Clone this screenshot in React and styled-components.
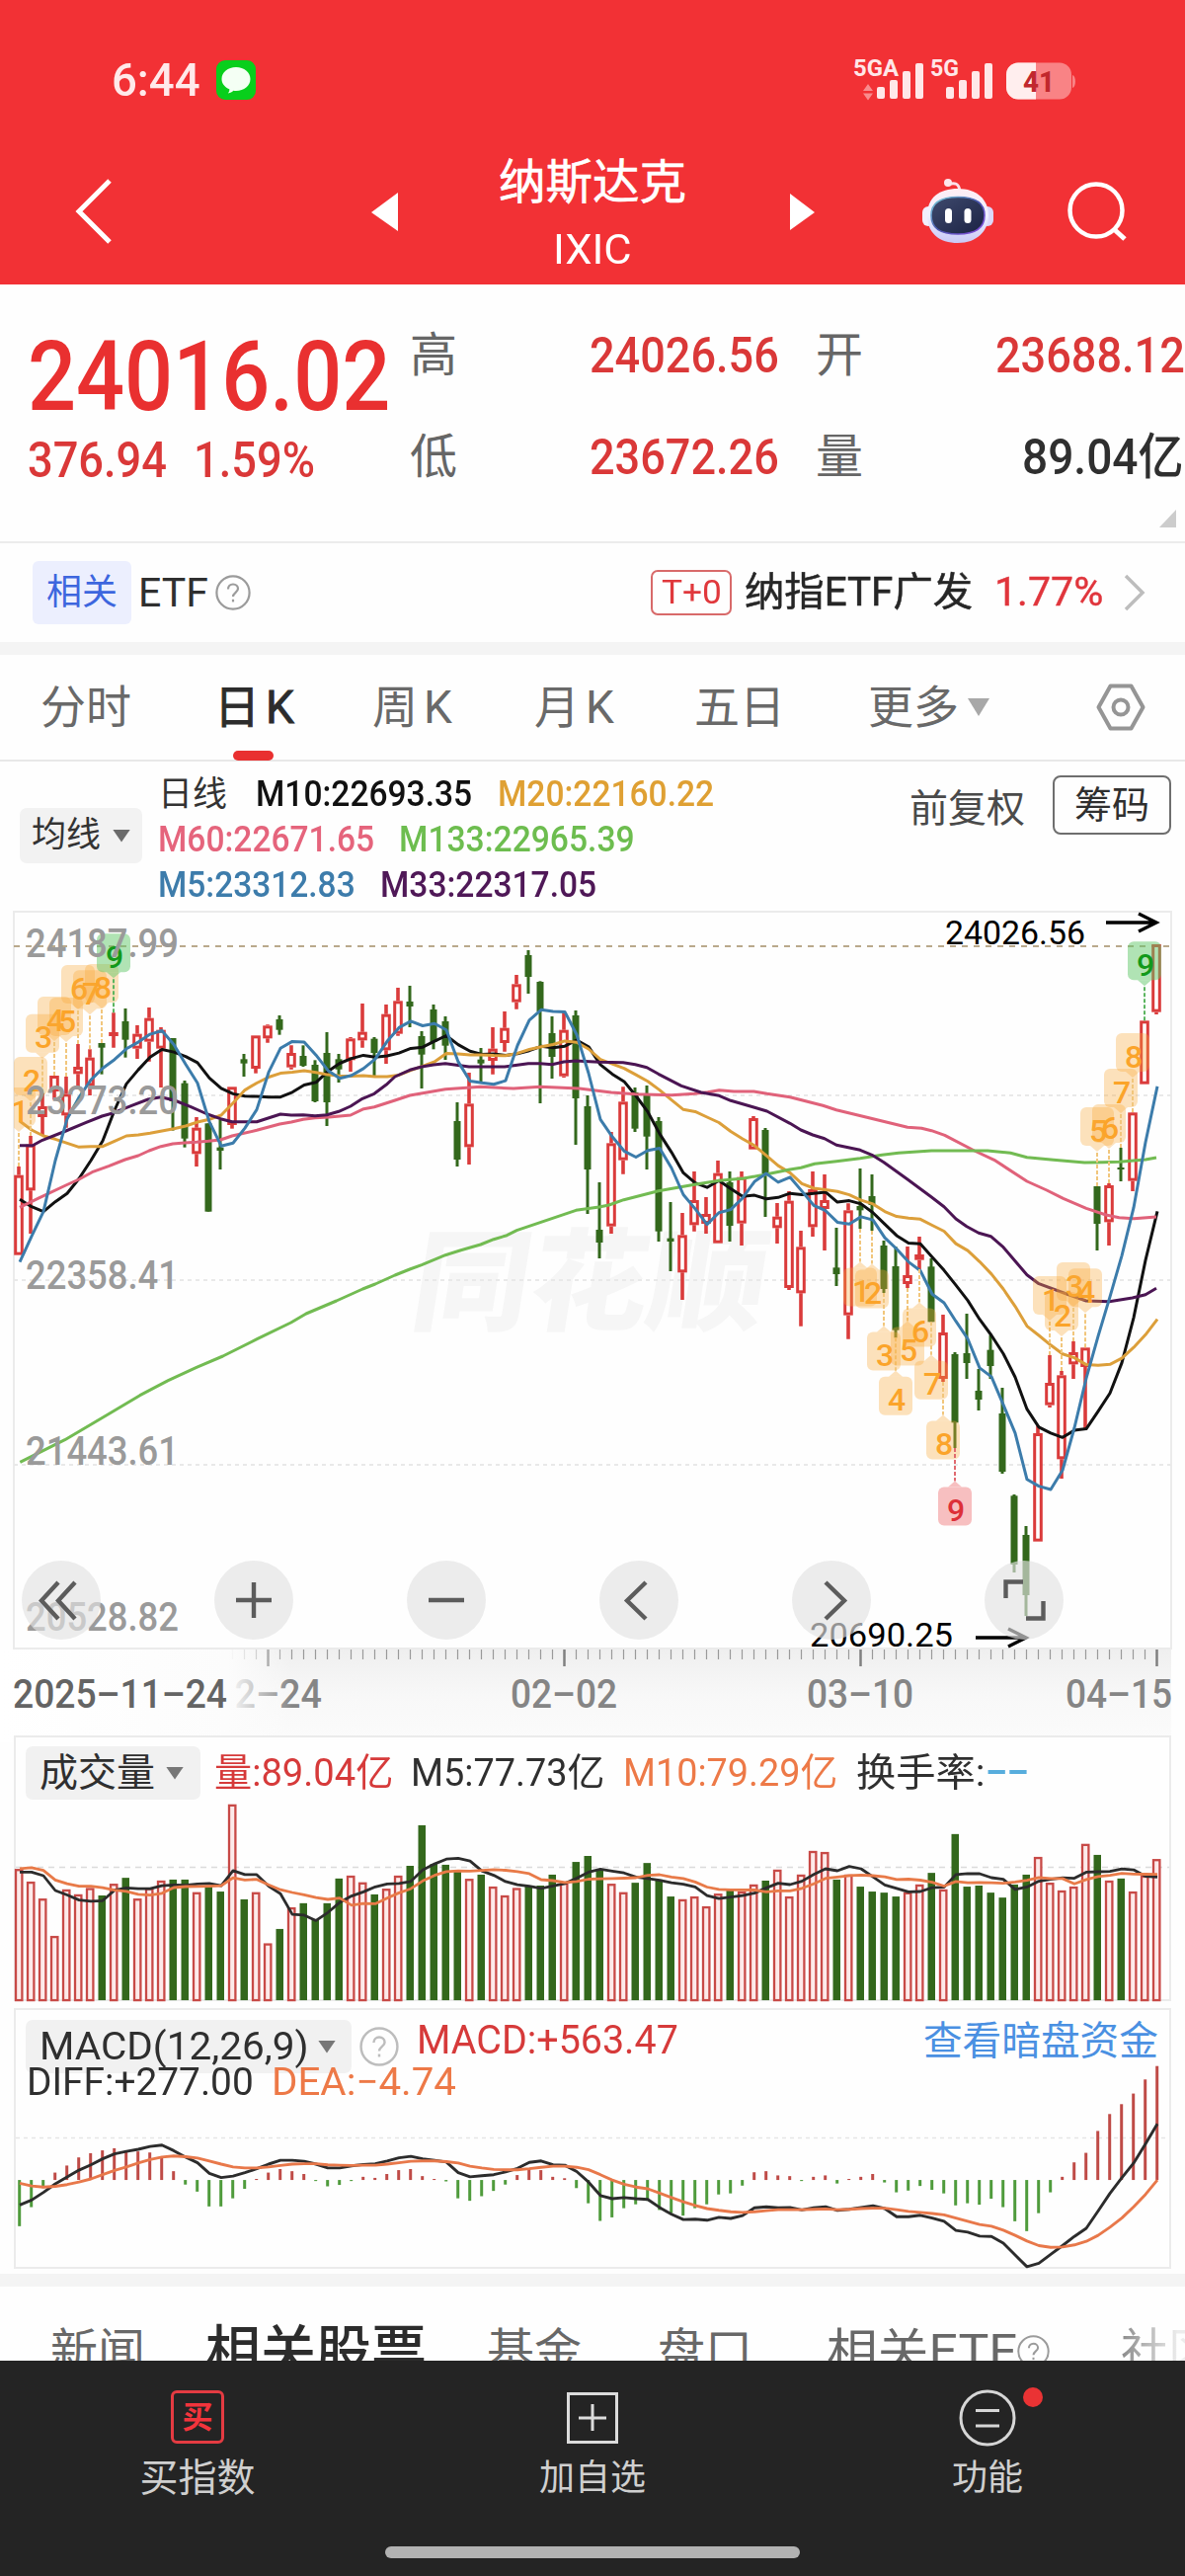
import React, { useLayoutEffect, useRef, useState } from "react";
import styled, { createGlobalStyle, css } from "styled-components";

const FONT = `Roboto, "Noto Sans CJK SC", "Noto Sans", sans-serif`;

const STEP = 12;
const FIRST_X = 19;
const xAt = (i) => FIRST_X + STEP * i;

// [direction, high, body top, body bottom, low], 3 units = 1px
const candles = [
  ["r", 783, 809, 1052, 1052], ["r", 690, 716, 856, 987], ["r", 560, 600, 633, 690],
  ["r", 507, 507, 555, 580], ["r", 510, 562, 628, 665], ["r", 411, 480, 502, 548],
  ["r", 427, 452, 538, 567], ["g", 408, 408, 422, 503], ["r", 316, 375, 387, 422],
  ["g", 303, 342, 398, 452], ["r", 354, 380, 425, 456], ["r", 300, 332, 404, 464],
  ["r", 360, 368, 425, 543], ["g", 393, 393, 585, 674], ["g", 522, 530, 698, 725],
  ["r", 633, 665, 745, 783], ["g", 652, 652, 920, 920], ["g", 640, 725, 735, 792],
  ["r", 541, 541, 657, 668], ["g", 441, 457, 470, 510], ["r", 385, 385, 486, 500],
  ["r", 352, 355, 394, 407], ["g", 324, 336, 368, 383], ["r", 415, 438, 482, 488],
  ["g", 415, 447, 477, 480], ["g", 460, 474, 585, 588], ["g", 375, 438, 588, 660],
  ["g", 441, 457, 488, 528], ["r", 390, 394, 460, 495], ["r", 288, 374, 400, 422],
  ["g", 390, 395, 438, 510], ["r", 291, 320, 430, 471], ["r", 240, 280, 380, 386],
  ["g", 234, 282, 297, 360], ["g", 372, 387, 443, 546], ["g", 291, 306, 405, 427],
  ["g", 327, 342, 416, 459], ["g", 588, 645, 762, 783], ["r", 498, 592, 724, 777],
  ["g", 423, 458, 470, 528], ["r", 360, 425, 462, 503], ["r", 312, 362, 408, 434],
  ["r", 201, 229, 284, 305], ["g", 126, 141, 207, 258], ["g", 220, 222, 312, 591],
  ["g", 327, 378, 450, 516], ["r", 312, 368, 509, 513], ["g", 309, 324, 576, 717],
  ["g", 567, 600, 792, 927], ["g", 831, 975, 1014, 1062], ["r", 678, 712, 965, 987],
  ["r", 541, 586, 764, 806], ["g", 543, 558, 668, 678], ["g", 537, 567, 692, 792],
  ["g", 633, 645, 980, 1011], ["g", 891, 1001, 1011, 1101], ["r", 924, 991, 1105, 1188],
  ["r", 798, 885, 961, 980], ["r", 876, 927, 957, 987], ["r", 765, 803, 1016, 1016],
  ["g", 798, 831, 963, 1011], ["r", 798, 815, 956, 1023], ["r", 630, 636, 731, 731],
  ["g", 666, 672, 804, 936], ["r", 894, 935, 970, 1017], ["r", 858, 887, 1152, 1158],
  ["r", 978, 1027, 1168, 1268], ["r", 798, 852, 967, 996], ["r", 807, 885, 912, 1038],
  ["g", 969, 1090, 1110, 1146], ["r", 895, 916, 1235, 1307], ["g", 789, 903, 916, 972],
  ["g", 807, 873, 900, 978], ["g", 1008, 1023, 1155, 1167], ["g", 1026, 1086, 1280, 1303],
  ["r", 1026, 1113, 1140, 1152], ["r", 996, 1050, 1067, 1095], ["g", 1062, 1087, 1255, 1255],
  ["r", 1233, 1287, 1428, 1437], ["g", 1347, 1353, 1561, 1638], ["g", 1230, 1350, 1380, 1428],
  ["g", 1398, 1464, 1491, 1524], ["g", 1295, 1340, 1389, 1428], ["g", 1455, 1533, 1710, 1716],
  ["g", 1779, 1783, 1992, 2016], ["g", 1875, 1902, 2085, 2148], ["r", 1570, 1593, 1922, 1922],
  ["r", 1356, 1440, 1508, 1515], ["r", 1404, 1417, 1672, 1731], ["r", 1314, 1347, 1384, 1428],
  ["r", 1333, 1333, 1392, 1580], ["g", 843, 843, 957, 1038], ["r", 834, 840, 952, 1023],
  ["g", 726, 786, 792, 828], ["r", 618, 619, 827, 858], ["r", 340, 340, 533, 533],
  ["r", 108, 108, 314, 321],
];

// top of each volume bar, 2.8 units = 1px, bars stand on VOL_BASE
const VOL_BASE = 773;
const volumes = [
  401, 437, 485, 591, 459, 473, 455, 476, 443, 426, 485, 455, 434, 431, 431, 467, 448, 465, 218, 487,
  467, 612, 571, 510, 498, 545, 498, 428, 420, 439, 473, 457, 420, 392, 277, 387, 389, 409, 429, 417,
  451, 476, 455, 450, 448, 417, 440, 381, 364, 406, 443, 467, 440, 384, 431, 479, 487, 479, 507, 471,
  459, 465, 445, 434, 403, 479, 417, 350, 353, 431, 417, 451, 465, 468, 479, 467, 445, 412, 459, 302,
  451, 448, 468, 482, 445, 417, 367, 440, 462, 451, 330, 361, 434, 428, 465, 420, 373,
];

// MACD panel, same 2.8 units, zero line at MACD_ZERO
const MACD_ZERO = 1277;
const macd = [
  1408, 1354, 1300, 1256, 1236, 1213, 1201, 1193, 1187, 1193, 1196, 1199, 1215, 1252, 1290, 1310, 1352,
  1352, 1329, 1302, 1274, 1256, 1246, 1252, 1260, 1280, 1295, 1291, 1280, 1268, 1271, 1260, 1249, 1246,
  1266, 1274, 1281, 1329, 1336, 1323, 1308, 1290, 1263, 1246, 1249, 1268, 1272, 1300, 1343, 1393, 1383,
  1357, 1346, 1336, 1362, 1371, 1378, 1357, 1346, 1318, 1315, 1293, 1255, 1252, 1264, 1266, 1280, 1268,
  1264, 1287, 1274, 1268, 1260, 1284, 1312, 1307, 1294, 1305, 1315, 1349, 1343, 1347, 1330, 1354, 1394,
  1422, 1371, 1312, 1268, 1227, 1200, 1138, 1090, 1062, 1032, 992, 954,
];
const diff = [
  1348, 1334, 1312, 1288, 1268, 1249, 1234, 1217, 1203, 1196, 1190, 1182, 1178, 1194, 1212, 1228, 1258,
  1270, 1266, 1256, 1245, 1232, 1221, 1221, 1224, 1232, 1243, 1243, 1237, 1233, 1231, 1223, 1214, 1210,
  1217, 1221, 1226, 1256, 1268, 1265, 1262, 1254, 1244, 1227, 1223, 1234, 1235, 1253, 1283, 1321, 1330,
  1327, 1330, 1332, 1355, 1374, 1389, 1388, 1391, 1383, 1386, 1378, 1356, 1353, 1356, 1355, 1362, 1356,
  1353, 1363, 1360, 1355, 1350, 1358, 1381, 1381, 1377, 1385, 1394, 1420, 1425, 1436, 1437, 1456, 1490,
  1523, 1513, 1488, 1463, 1437, 1414, 1365, 1315, 1271, 1229, 1175, 1118,
];
const dea = [
  1286, 1294, 1297, 1295, 1290, 1283, 1274, 1262, 1250, 1240, 1229, 1219, 1212, 1209, 1211, 1215, 1223,
  1232, 1240, 1243, 1243, 1240, 1236, 1232, 1231, 1231, 1234, 1235, 1236, 1235, 1235, 1232, 1228, 1224,
  1223, 1223, 1225, 1229, 1238, 1243, 1247, 1248, 1248, 1245, 1241, 1238, 1238, 1241, 1248, 1262, 1277,
  1289, 1297, 1302, 1314, 1327, 1339, 1349, 1358, 1363, 1367, 1369, 1367, 1364, 1361, 1361, 1361, 1360,
  1359, 1361, 1360, 1358, 1357, 1357, 1361, 1366, 1369, 1372, 1376, 1385, 1394, 1403, 1408, 1419, 1434,
  1450, 1463, 1468, 1467, 1461, 1451, 1434, 1411, 1385, 1353, 1318, 1277,
];

// slow averages, [x, y] pairs in candle units
const m33 = [
  60, 719, 99, 719, 129, 703, 200, 675, 260, 650, 310, 630, 345, 620, 400, 598, 450, 579, 489, 572, 530,
  582, 580, 602, 630, 624, 670, 638, 705, 647, 780, 647, 852, 624, 885, 627, 921, 626, 957, 629, 993, 626,
  1029, 616, 1065, 600, 1101, 577, 1137, 562, 1173, 535, 1200, 510, 1245, 490, 1281, 480, 1317, 474, 1353,
  470, 1425, 480, 1533, 480, 1605, 470, 1641, 470, 1677, 473, 1713, 465, 1749, 462, 1820, 466, 1893, 467,
  1930, 473, 1965, 482, 2000, 502, 2070, 538, 2130, 558, 2185, 568, 2220, 583, 2290, 603, 2330, 615, 2400,
  652, 2433, 672, 2469, 687, 2505, 698, 2541, 718, 2577, 725, 2613, 733, 2649, 748, 2685, 770, 2757, 822,
  2829, 875, 2868, 905, 2904, 942, 2937, 965, 2973, 985, 3010, 995, 3048, 1028, 3084, 1070, 3120, 1112,
  3156, 1139, 3240, 1170, 3300, 1191, 3370, 1193, 3440, 1182, 3480, 1172, 3513, 1153,
];
const m60 = [
  60, 907, 120, 878, 200, 840, 240, 822, 280, 800, 330, 782, 380, 762, 420, 750, 453, 735, 489, 722, 525,
  714, 561, 711, 597, 709, 633, 706, 670, 702, 705, 690, 780, 673, 850, 654, 885, 648, 921, 640, 957, 635,
  1000, 633, 1065, 627, 1105, 608, 1137, 602, 1200, 582, 1245, 567, 1353, 548, 1460, 541, 1560, 546, 1641,
  541, 1760, 546, 1857, 558, 1930, 563, 2040, 566, 2110, 562, 2150, 557, 2185, 551, 2230, 555, 2290, 555,
  2330, 562, 2400, 572, 2500, 598, 2541, 611, 2640, 635, 2757, 664, 2800, 667, 2830, 674, 2870, 688, 2960,
  735, 3020, 763, 3120, 828, 3180, 855, 3230, 880, 3300, 910, 3360, 930, 3400, 938, 3445, 941, 3513, 936,
];
const m133 = [
  61, 1681, 197, 1613, 333, 1533, 425, 1478, 511, 1433, 597, 1393, 677, 1359, 781, 1307, 884, 1257, 930,
  1230, 1022, 1191, 1102, 1155, 1140, 1140, 1200, 1113, 1245, 1095, 1281, 1082, 1353, 1052, 1400, 1037,
  1460, 1020, 1500, 1004, 1540, 992, 1570, 977, 1650, 950, 1750, 916, 1820, 906, 1850, 900, 1895, 884,
  2000, 857, 2110, 838, 2185, 826, 2260, 819, 2330, 806, 2400, 792, 2433, 787, 2475, 775, 2541, 767, 2613,
  758, 2680, 748, 2730, 742, 2830, 735, 3000, 735, 3070, 742, 3120, 755, 3200, 763, 3295, 771, 3350, 770,
  3400, 769, 3480, 762, 3513, 756,
];

// moving average; head holds the values that need older bars than we have
const average = (values, n, head) =>
  values.map((_, i) => {
    if (i < head.length) return head[i];
    let sum = 0;
    for (let k = i - n + 1; k <= i; k++) sum += values[k];
    return sum / n;
  });

const closes = candles.map((c) => (c[0] === "r" ? c[2] : c[3]));
const priceM5 = average(closes, 5, [1073, 995, 920, 765]);
const priceM10 = average(closes, 10, [883, 905, 920, 890, 865, 820, 765, 705, 612]);
const priceM20 = average(closes, 20, [
  645, 672, 690, 700, 712, 724, 722, 722, 706, 690, 687, 682, 675, 668, 660, 648, 640, 627, 590,
]);
const volM5 = average(volumes, 5, [410, 410, 420, 462]);
const volM10 = average(volumes, 10, [400, 397, 405, 432, 443, 450, 450, 454, 461]);

const toLine = (values, unit, dx = 1) => values.map((v, i) => `${xAt(i) + dx},${(v / unit).toFixed(1)}`).join(" ");
const toPairs = (list) => {
  const out = [];
  for (let i = 0; i < list.length; i += 2) out.push(`${(list[i] / 3).toFixed(1)},${(list[i + 1] / 3).toFixed(1)}`);
  return out.join(" ");
};

// nine-turn marks: [candle index, label, side]
const marks = [
  [0, 1, "up"], [1, 2, "up"], [2, 3, "up"], [3, 4, "up"], [4, 5, "up"], [5, 6, "up"], [6, 7, "up"],
  [7, 8, "up"], [8, 9, "up"],
  [71, 1, "down"], [72, 2, "down"], [73, 3, "down"], [74, 4, "down"], [75, 5, "down"], [76, 6, "down"],
  [77, 7, "down"], [78, 8, "down"], [79, 9, "down"],
  [87, 1, "up"], [88, 2, "up"], [89, 3, "up"], [90, 4, "up"], [91, 5, "up"], [92, 6, "up"], [93, 7, "up"],
  [94, 8, "up"], [95, 9, "up"],
];

// squeezes its text to the width of the slot
const Fit = ({ w, ml, children, ...rest }) => {
  const ref = useRef(null);
  const [scale, setScale] = useState(1);

  useLayoutEffect(() => {
    setScale(w / ref.current.offsetWidth);
  }, [w]);

  return (
    <Slot $w={w} $ml={ml} {...rest}>
      <SlotText ref={ref} style={{ transform: `scaleX(${scale})` }}>{children}</SlotText>
    </Slot>
  );
};

const Help = ({ size, color }) => (
  <svg width={size} height={size} viewBox="0 0 36 36" fill="none" stroke={color} strokeWidth="2.2">
    <circle cx="18" cy="18" r="16.6" />
    <path d="M13 14.5c0-3 2.2-5 5-5s5 1.900 5 4.600c0 3.600-5 4-5 8" />
    <path d="M18 24.800v2.600" />
  </svg>
);

const Robot = () => (
  <svg width="72" height="68" viewBox="0 0 72 68">
    <defs>
      <linearGradient id="shell" x1="0" y1="0" x2="0" y2="1">
        <stop offset="0" stopColor="#ffeef4" />
        <stop offset="0.5" stopColor="#eef0ff" />
        <stop offset="1" stopColor="#c9c8f6" />
      </linearGradient>
      <linearGradient id="visor" x1="0" y1="0" x2="1" y2="1">
        <stop offset="0" stopColor="#3f4a6e" />
        <stop offset="1" stopColor="#1b2243" />
      </linearGradient>
      <linearGradient id="rim" x1="0" y1="0" x2="1" y2="1">
        <stop offset="0" stopColor="#7fd6dd" />
        <stop offset="0.5" stopColor="#4b57b0" />
        <stop offset="1" stopColor="#8a4be0" />
      </linearGradient>
    </defs>
    <path d="M26 6.500c7-2 11-1 12 7" fill="none" stroke="#fbdfe8" strokeWidth="3" />
    <circle cx="26" cy="5" r="4" fill="#fde6ec" />
    <rect x="0" y="29" width="12" height="20" rx="6" fill="#f2eefc" />
    <rect x="60" y="29" width="12" height="20" rx="6" fill="#dcd8fa" />
    <path d="M36 11C55 11 67 22 67 38S55 66 36 66S5 56 5 38S17 11 36 11Z" fill="url(#shell)" />
    <path d="M36 19.500C54 19.500 63 25 63 38S54 57 36 57S9 51 9 38S18 19.500 36 19.500Z" fill="url(#visor)" stroke="url(#rim)" strokeWidth="1.600" />
    <rect x="23" y="31" width="7" height="15" rx="3.500" fill="#fff" />
    <rect x="42.500" y="31" width="7" height="15" rx="3.500" fill="#fff" />
  </svg>
);

const StatusIcons = () => (
  <svg width="228" height="60" viewBox="864 50 228 60">
    <g fill="#ffe7e8" fontFamily={FONT} fontWeight="700" fontSize="24">
      <text x="864" y="76" textLength="46" lengthAdjust="spacingAndGlyphs">5GA</text>
      <text x="942" y="76" textLength="29" lengthAdjust="spacingAndGlyphs">5G</text>
      {[0, 70].map((dx) => (
        <g key={dx}>
          <rect x={888 + dx} y="87" width="8" height="12" rx="2" />
          <rect x={901 + dx} y="80" width="8" height="19" rx="2" />
          <rect x={914 + dx} y="71" width="8" height="28" rx="2" />
          <rect x={927 + dx} y="63" width="8" height="36" rx="2" />
        </g>
      ))}
    </g>
    <path d="M874 91l5-7 5 7zM874 93.500h10l-5 7z" fill="#f98b8d" />
    <rect x="1019" y="62.500" width="66" height="37" rx="12" fill="#f98385" />
    <path d="M1049 62.500h-18a12 12 0 0 0-12 12v13a12 12 0 0 0 12 12h18z" fill="#ffeeee" />
    <path d="M1086 75c4 1 4 12 0 13z" fill="#f98385" />
    <text x="1036" y="92" fontFamily={FONT} fontWeight="800" fontSize="30" fill="#c1282d" textLength="32" lengthAdjust="spacingAndGlyphs">41</text>
  </svg>
);

const Mark = ({ index, label, side }) => {
  const x = xAt(index);
  const last = label === 9;
  const color = !last ? "#fba42a" : side === "up" ? "#12991a" : "#dd2f38";
  const fill = !last ? "rgba(250, 170, 60, 0.34)" : side === "up" ? "rgba(98, 200, 105, 0.5)" : "#f7bfc0";
  const dash = !last ? "#f1c67c" : side === "up" ? "#5cb560" : "#e06a70";
  const sign = side === "up" ? -1 : 1;
  const from = (side === "up" ? candles[index][1] : candles[index][4]) / 3;
  const tip = from + sign * (side === "up" ? 35 : 33.5);
  const near = tip + sign * 6;
  const top = side === "up" ? near - 39 : near;

  return (
    <g>
      <path d={`M${x} ${from}V${tip}`} stroke={dash} strokeWidth="2" strokeDasharray="4 2" />
      <rect x={x - 17} y={top} width="34" height="39" rx="6" fill={fill} />
      <path d={`M${x - 7} ${near}L${x} ${tip}L${x + 7} ${near}Z`} fill={fill} />
      <text x={x + 1} y={top + 34.5} fontSize="32" fontWeight="500" textAnchor="middle" fill={color}>{label}</text>
    </g>
  );
};

const PriceChart = () => (
  <ChartArea>
    <svg width="1200" height="750" viewBox="0 0 1200 750" fontFamily={FONT}>
      <defs>
        <clipPath id="plot">
          <rect x="14" y="2" width="1172" height="748" />
        </clipPath>
      </defs>
      <text x="413" y="418" fontSize="112" fontWeight="900" fill="#f6f6f6" textLength="358" lengthAdjust="spacingAndGlyphs" transform="translate(66 0) skewX(-9)">同花顺</text>
      <rect x="14" y="3" width="1172" height="746" fill="none" stroke="#ebebeb" strokeWidth="2" />
      {[189, 376, 563].map((y) => (
        <path key={y} d={`M14 ${y}H1186`} stroke="#e9e9e9" strokeWidth="2" strokeDasharray="4 4" />
      ))}
      <path d="M14 38H1186" stroke="#b9a98c" strokeWidth="2" strokeDasharray="6 6" />
      <g clipPath="url(#plot)">
        {candles.map(([dir, high, top, bottom, low], i) => {
          const x = xAt(i);
          const t = top / 3;
          const b = bottom / 3;
          if (dir === "g") {
            return (
              <g key={i} fill="#33681c">
                <rect x={x - 1.5} y={high / 3} width="3" height={(low - high) / 3} />
                <rect x={x - 3.5} y={t} width="7" height={b - t} />
              </g>
            );
          }
          return (
            <g key={i}>
              <path d={`M${x} ${high / 3}V${t}M${x} ${b}V${low / 3}`} stroke="#da3b3b" strokeWidth="3.600" />
              <rect x={x - 3.3} y={t + 1.5} width="6.600" height={Math.max(b - t - 3, 1)} fill="#fff" stroke="#da3b3b" strokeWidth="3" />
            </g>
          );
        })}
        <g fill="none" strokeWidth="3" strokeLinejoin="round">
          <polyline points={toLine(priceM10, 3)} stroke="#111" />
          <polyline points={toLine(priceM20, 3)} stroke="#dc9f3a" />
          <polyline points={toPairs(m60)} stroke="#e0627a" />
          <polyline points={toPairs(m133)} stroke="#72bb52" />
          <polyline points={toPairs(m33)} stroke="#4b1553" />
          <polyline points={toLine(priceM5, 3)} stroke="#3c7cab" />
        </g>
        {marks.map(([index, label, side]) => (
          <Mark key={index} index={index} label={label} side={side} />
        ))}
      </g>
      <g fill="#9a9a9a" fontSize="40" fontWeight="500">
        {["24187.99", "23273.20", "22358.41", "21443.61", "20528.82"].map((price, i) => (
          <text key={price} x="26" y={[49, 208, 385, 563, 731][i]} textLength="155" lengthAdjust="spacingAndGlyphs">{price}</text>
        ))}
      </g>
      <g fontSize="34" fill="#000">
        <text x="957" y="36" textLength="142" lengthAdjust="spacingAndGlyphs">24026.56</text>
        <text x="820" y="747" textLength="145" lengthAdjust="spacingAndGlyphs">20690.25</text>
      </g>
      <g fill="none" stroke="#000" strokeWidth="3.400">
        <path d="M1120 14H1170M1153 5L1171 14L1153 23" />
        <path d="M988 738H1038M1021 729L1039 738L1021 747" />
      </g>
    </svg>
    <Tools>
      <RoundButton><svg width="80" height="80" viewBox="0 0 80 80"><path d="M37 22L20 40.500L37 59M54 22L37 40.500L54 59" /></svg></RoundButton>
      <RoundButton><svg width="80" height="80" viewBox="0 0 80 80"><path d="M22 40H58M40 22V58" /></svg></RoundButton>
      <RoundButton><svg width="80" height="80" viewBox="0 0 80 80"><path d="M22 40H58" /></svg></RoundButton>
      <RoundButton><svg width="80" height="80" viewBox="0 0 80 80"><path d="M47 22L28 40.500L47 59" /></svg></RoundButton>
      <RoundButton><svg width="80" height="80" viewBox="0 0 80 80"><path d="M34 22L53 40.500L34 59" /></svg></RoundButton>
      <RoundButton><svg width="80" height="80" viewBox="0 0 80 80"><path d="M21.500 38V21.500H39M59.500 41V58.500H42" /></svg></RoundButton>
    </Tools>
  </ChartArea>
);

const TimeAxis = () => {
  const ticks = [];
  for (let i = 18; i <= 96; i++) ticks.push(i);
  return (
    <svg width="1200" height="94" viewBox="0 0 1200 94" fontFamily={FONT} fontSize="40" fontWeight="500">
      <defs>
        <linearGradient id="strip" x1="0" y1="0" x2="0" y2="1">
          <stop offset="0" stopColor="#efefef" />
          <stop offset="0.500" stopColor="#f8f8f8" />
          <stop offset="1" stopColor="#fbfbfb" />
        </linearGradient>
        <linearGradient id="veil">
          <stop offset="0" stopColor="#fff" />
          <stop offset="0.780" stopColor="#fcfcfc" />
          <stop offset="1" stopColor="#fcfcfc" stopOpacity="0" />
        </linearGradient>
      </defs>
      <rect x="0" y="0" width="1186" height="94" fill="url(#strip)" />
      {ticks.map((i) => (
        <path
          key={i}
          d={`M${xAt(i) + 0.5} 0V${i % 25 === 21 ? 17 : 10}`}
          stroke={i % 25 === 21 ? "#808080" : "#9a9a9a"}
          strokeWidth={i % 25 === 21 ? 2.5 : 1.2}
        />
      ))}
      <g fill="#858585">
        <text x="216" y="59" textLength="110" lengthAdjust="spacingAndGlyphs">12–24</text>
        <text x="517" y="59" textLength="108" lengthAdjust="spacingAndGlyphs">02–02</text>
        <text x="817" y="59" textLength="108" lengthAdjust="spacingAndGlyphs">03–10</text>
        <text x="1079" y="59" textLength="108" lengthAdjust="spacingAndGlyphs">04–15</text>
      </g>
      <rect x="0" y="0" width="296" height="94" fill="url(#veil)" />
      <text x="13" y="59" fill="#646464" textLength="217" lengthAdjust="spacingAndGlyphs">2025–11–24</text>
    </svg>
  );
};

const VolumeChart = () => (
  <Plot width="1168" height="201" viewBox="16 74 1168 201">
    <path d="M16 141.500H1184" stroke="#dcdcdc" strokeWidth="1.500" strokeDasharray="6 5" />
    {volumes.map((v, i) => {
      const y = v / 2.8;
      const h = (VOL_BASE - v) / 2.8;
      return candles[i][0] === "g" ? (
        <rect key={i} x={xAt(i) - 3.5} y={y} width="7.500" height={h} fill="#33681c" />
      ) : (
        <rect key={i} x={xAt(i) - 3} y={y + 1} width="6.400" height={h - 1} fill="#fdeaea" stroke="#c84a47" strokeWidth="2.300" />
      );
    })}
    <g fill="none" strokeWidth="2.800" strokeLinejoin="round">
      <polyline points={toLine(volM5, 2.8)} stroke="#2c2c2c" />
      <polyline points={toLine(volM10, 2.8)} stroke="#e87a48" />
    </g>
  </Plot>
);

const MacdChart = () => (
  <Plot width="1168" height="171" viewBox="16 374 1168 171">
    <path d="M16 413.500H1184" stroke="#e6e6e6" strokeWidth="1.600" strokeDasharray="4 4" />
    {macd.map((v, i) => (
      <path
        key={i}
        d={`M${xAt(i) + 0.7} ${MACD_ZERO / 2.8}V${v / 2.8}`}
        stroke={v < MACD_ZERO ? "#bf4b47" : "#4f9b3c"}
        strokeWidth="3"
      />
    ))}
    <g fill="none" strokeWidth="2.900" strokeLinejoin="round">
      <polyline points={toLine(diff, 2.8)} stroke="#2c2c2c" />
      <polyline points={toLine(dea, 2.8)} stroke="#e8784a" />
    </g>
  </Plot>
);

const App = () => {
  return (
    <Page>
      <GlobalStyle />
      <Header>
        <StatusBar>
          <Clock><Fit w={90}>6:44</Fit></Clock>
          <svg width="40" height="40" viewBox="0 0 40 40">
            <rect width="40" height="40" rx="9" fill="#08cf1c" />
            <path d="M20 7c8.300 0 14.500 5.200 14.500 12S28.300 31 20 31c-1 0-1.800 0-2.600-.2-1.400 1.400-3.200 2.400-5.400 2.600 1-1.300 1.500-2.600 1.300-4.100C8.500 27.300 5.500 23.600 5.500 19 5.500 12.200 11.700 7 20 7z" fill="#f4fff4" />
          </svg>
          <StatusRight><StatusIcons /></StatusRight>
        </StatusBar>
        <NavBar>
          <svg width="40" height="68" viewBox="0 0 40 68" fill="none" stroke="#fff" strokeWidth="5"><path d="M37 3L6 34L37 65" /></svg>
          <PrevArrow width="27" height="40" viewBox="0 0 27 40"><path d="M0 21L27 1V40Z" fill="#fff" /></PrevArrow>
          <Title>
            <Name>纳斯达克</Name>
            <Code><Fit w={80}>IXIC</Fit></Code>
          </Title>
          <NextArrow width="25" height="38" viewBox="0 0 25 38"><path d="M25 20L0 1V38Z" fill="#fff" /></NextArrow>
          <Robot />
          <SearchIcon width="64" height="62" viewBox="0 0 64 62" fill="none" stroke="#fff" strokeWidth="4.500">
            <circle cx="30" cy="30" r="26.500" />
            <path d="M48 49L59 59" strokeWidth="5" />
          </SearchIcon>
        </NavBar>
      </Header>

      <Quote>
        <Price>
          <Last><Fit w={367}>24016.02</Fit></Last>
          <Change>
            <Fit w={141}>376.94</Fit>
            <Fit w={123} ml={27}>1.59%</Fit>
          </Change>
        </Price>
        <Stats>
          <StatRow>
            <Label>高</Label>
            <Fit w={192} ml={134}>24026.56</Fit>
            <Label $ml={37}>开</Label>
            <Fit w={192} ml={134}>23688.12</Fit>
          </StatRow>
          <StatRow>
            <Label>低</Label>
            <Fit w={192} ml={134}>23672.26</Fit>
            <Label $ml={37}>量</Label>
            <Dark><Fit w={164} ml={161}>89.04亿</Fit></Dark>
          </StatRow>
          <Corner />
        </Stats>
      </Quote>

      <EtfRow>
        <RelatedTag>相关</RelatedTag>
        <EtfLabel><Fit w={71}>ETF</Fit></EtfLabel>
        <Help size={36} color="#9b9b9b" />
        <EtfRight>
          <T0Tag><Fit w={61}>T+0</Fit></T0Tag>
          <EtfName><Fit w={231}>纳指ETF广发</Fit></EtfName>
          <EtfRate><Fit w={110}>1.77%</Fit></EtfRate>
          <svg width="24" height="38" viewBox="0 0 24 38" fill="none" stroke="#bdbdbd" strokeWidth="3.500"><path d="M3 2L20 19L3 36" /></svg>
        </EtfRight>
      </EtfRow>
      <Band />

      <Tabs>
        <Tab $w={136}>分时</Tab>
        <Tab $w={160} $active>日K</Tab>
        <Tab $w={164}>周K</Tab>
        <Tab $w={162}>月K</Tab>
        <Tab $w={176}>五日</Tab>
        <Tab $w={101}>更多</Tab>
        <Caret $w={22} $h={18} $c="#a8a8a8" />
        <Hexagon width="52" height="50" viewBox="0 0 52 50" fill="none" stroke="#959595" strokeWidth="4">
          <path d="M15.500 3.500H36.500L48.500 25L36.500 46.500H15.500L3.500 25Z" strokeLinejoin="round" />
          <circle cx="26" cy="25" r="7.500" />
        </Hexagon>
      </Tabs>

      <Legend>
        <AverageButton>均线<Caret $w={18} $h={13} $c="#6b6b6b" $ml={12} /></AverageButton>
        <LegendRows>
          <LegendRow>
            <Period>日线</Period>
            <LegendItem $c="#111"><Fit w={219} ml={29}>M10:22693.35</Fit></LegendItem>
            <LegendItem $c="#dfa033"><Fit w={219} ml={26}>M20:22160.22</Fit></LegendItem>
          </LegendRow>
          <LegendRow>
            <LegendItem $c="#e5647c"><Fit w={219} ml={1}>M60:22671.65</Fit></LegendItem>
            <LegendItem $c="#6dbd4f"><Fit w={239} ml={25}>M133:22965.39</Fit></LegendItem>
          </LegendRow>
          <LegendRow>
            <LegendItem $c="#3d7cab"><Fit w={200} ml={1}>M5:23312.83</Fit></LegendItem>
            <LegendItem $c="#4f1857"><Fit w={219} ml={25}>M33:22317.05</Fit></LegendItem>
          </LegendRow>
        </LegendRows>
        <LegendRight>
          <Restore>前复权</Restore>
          <ChipsButton>筹码</ChipsButton>
        </LegendRight>
      </Legend>

      <PriceChart />
      <AxisStrip><TimeAxis /></AxisStrip>

      <Panel $h={269}>
        <VolumeHead>
          <Picker $w={177}>成交量<Caret $w={18} $h={13} $c="#777" $ml={11} /></Picker>
          <Figure $c="#d63a3a"><Fit w={181} ml={14}>量:89.04亿</Fit></Figure>
          <Figure $c="#2f2f2f"><Fit w={196} ml={18}>M5:77.73亿</Fit></Figure>
          <Figure $c="#ed7947"><Fit w={217} ml={19}>M10:79.29亿</Fit></Figure>
          <Figure $c="#2f2f2f"><Fit w={130} ml={19}>换手率:</Fit></Figure>
          <Figure $c="#57addd" $bold><Fit w={44} ml={1}>––</Fit></Figure>
        </VolumeHead>
        <VolumeChart />
      </Panel>
      <Panel $h={264} $mt={7}>
        <MacdHead>
          <MacdTop>
            <Picker $w={330}><Fit w={272}>MACD(12,26,9)</Fit><Caret $w={18} $h={13} $c="#777" $ml={10} /></Picker>
            <HelpSlot><Help size={40} color="#bdbdbd" /></HelpSlot>
            <MacdValue><Fit w={265}>MACD:+563.47</Fit></MacdValue>
            <MacdLink>查看暗盘资金</MacdLink>
          </MacdTop>
          <MacdBottom>
            <Figure $c="#2f2f2f"><Fit w={230}>DIFF:+277.00</Fit></Figure>
            <Figure $c="#ed7947"><Fit w={187} ml={18}>DEA:−4.74</Fit></Figure>
          </MacdBottom>
        </MacdHead>
        <MacdChart />
      </Panel>
      <Band $mt={5} />

      <NewsTabs>
        <NewsTab $ml={51}>新闻</NewsTab>
        <NewsTab $ml={61} $active>相关股票</NewsTab>
        <NewsTab $ml={61}>基金</NewsTab>
        <NewsTab $ml={77}>盘口</NewsTab>
        <NewsTab $ml={75}><Fit w={193}>相关ETF</Fit></NewsTab>
        <Help size={33} color="#9b9b9b" />
        <NewsTab $ml={72} $faded>社区</NewsTab>
      </NewsTabs>

      <BottomBar>
        <Actions>
          <Action>
            <BuyIcon>买</BuyIcon>
            <ActionText $size={39}>买指数</ActionText>
          </Action>
          <Action>
            <svg width="58" height="58" viewBox="0 0 58 58" fill="none" stroke="#dcdcdc" strokeWidth="3">
              <rect x="4.500" y="4.500" width="49" height="49" />
              <path d="M15 29H43M29 15V42" />
            </svg>
            <ActionText $size={36}>加自选</ActionText>
          </Action>
          <Action>
            <svg width="58" height="58" viewBox="0 0 58 58" fill="none" stroke="#d6d6d6" strokeWidth="3">
              <circle cx="29" cy="29" r="27" />
              <path d="M17 21.500H41M17 37H41" />
            </svg>
            <Dot />
            <ActionText $size={36}>功能</ActionText>
          </Action>
        </Actions>
        <HomeIndicator />
      </BottomBar>
    </Page>
  );
};

const GlobalStyle = createGlobalStyle`
  body {
    margin: 0;
    background: #fff;
  }
  * {
    box-sizing: border-box;
  }
  svg {
    display: block;
    flex: none;
  }
`;

const Page = styled.div`
  width: 1200px;
  height: 2608px;
  overflow: hidden;
  display: flex;
  flex-direction: column;
  background: #fefefe;
  font-family: ${FONT};
  white-space: nowrap;
`;

const Slot = styled.span`
  display: inline-block;
  flex: none;
  width: ${(p) => p.$w}px;
  margin-left: ${(p) => p.$ml || 0}px;
`;

const SlotText = styled.span`
  display: inline-block;
  transform-origin: left center;
`;

const Header = styled.header`
  flex: none;
  height: 288px;
  background: #f23135;
  color: #fff;
`;

const StatusBar = styled.div`
  display: flex;
  align-items: center;
  height: 162px;
  padding-left: 113px;
`;

const Clock = styled.div`
  width: 106px;
  font-size: 46px;
  font-weight: 500;
  line-height: 60px;
  color: #ffe9ea;
`;

const StatusRight = styled.div`
  margin: 0 108px 1px auto;
`;

const NavBar = styled.div`
  display: flex;
  align-items: center;
  height: 104px;
  padding-left: 74px;
`;

const PrevArrow = styled.svg`
  margin-left: 262px;
`;

const NextArrow = styled.svg`
  margin: 0 109px 0 105px;
`;

const SearchIcon = styled.svg`
  margin-left: 74px;
`;

const Title = styled.div`
  display: flex;
  flex-direction: column;
  align-items: center;
  justify-content: space-between;
  width: 190px;
  height: 104px;
  margin-left: 102px;
`;

const Name = styled.div`
  font-size: 47.500px;
  line-height: 46px;
  -webkit-text-stroke: 0.6px #fff;
`;

const Code = styled.div`
  font-size: 43px;
  line-height: 28px;
`;

const red = css`
  color: #da3838;
  font-weight: 500;
`;

const Quote = styled.section`
  display: flex;
  flex: none;
  height: 262px;
  border-bottom: 2px solid #ececec;
`;

const Price = styled.div`
  width: 415px;
  padding: 43px 0 0 28px;
`;

const Last = styled.div`
  ${red}
  color: #e93030;
  font-size: 99px;
  line-height: 100px;
`;

const Change = styled.div`
  ${red}
  display: flex;
  font-size: 50px;
  line-height: 71px;
`;

const Stats = styled.div`
  ${red}
  flex: 1;
  padding-top: 24px;
  font-size: 50px;
`;

const StatRow = styled.div`
  display: flex;
  align-items: center;
  height: 96px;
  margin-bottom: 7px;
  line-height: 60px;
`;

const Label = styled.span`
  width: 48px;
  margin-left: ${(p) => p.$ml || 0}px;
  font-size: 48px;
  font-weight: 400;
  color: #666;
`;

const Dark = styled.span`
  color: #2f2f2f;
`;

const Corner = styled.div`
  width: 17px;
  height: 18px;
  margin: -2px 0 0 759px;
  background: #ccc;
  clip-path: polygon(100% 0, 100% 100%, 0 100%);
`;

const EtfRow = styled.section`
  display: flex;
  align-items: center;
  flex: none;
  height: 100px;
  padding-left: 33px;
`;

const RelatedTag = styled.span`
  width: 100px;
  height: 64px;
  border-radius: 6px;
  background: #eceffe;
  color: #3d66de;
  font-size: 36px;
  line-height: 65px;
  text-align: center;
`;

const EtfLabel = styled.span`
  margin: 0 7px 0 7px;
  font-size: 41px;
  color: #2f2f2f;
`;

const EtfRight = styled.div`
  display: flex;
  align-items: center;
  margin: 0 39px 0 auto;
`;

const T0Tag = styled.span`
  width: 82px;
  height: 46px;
  border: 2px solid #d86a6a;
  border-radius: 7px;
  padding-left: 9px;
  color: #e0383c;
  font-size: 33px;
  line-height: 42px;
`;

const EtfName = styled.span`
  margin-left: 13px;
  font-size: 40px;
  line-height: 50px;
  color: #262626;
  -webkit-text-stroke: 0.5px #262626;
`;

const EtfRate = styled.span`
  margin: 0 20px 0 22px;
  font-size: 40px;
  line-height: 50px;
  color: #e0353c;
  -webkit-text-stroke: 0.4px #e0353c;
`;

const Band = styled.div`
  flex: none;
  height: 13px;
  margin-top: ${(p) => p.$mt || 0}px;
  background: #f4f4f4;
`;

const Tabs = styled.nav`
  display: flex;
  align-items: center;
  flex: none;
  height: 108px;
  padding-left: 41px;
  border-bottom: 2px solid #e8e8e8;
`;

const Tab = styled.div`
  position: relative;
  flex: none;
  width: ${(p) => p.$w}px;
  font-size: 46px;
  letter-spacing: ${(p) => (p.children.includes("K") ? 6 : 0)}px;
  line-height: 107px;
  color: #696969;
  ${(p) => p.$active && css`
    margin-left: 40px;
    color: #2c2c2c;
    -webkit-text-stroke: 0.9px #2c2c2c;
    &::after {
      content: "";
      position: absolute;
      left: 19px;
      bottom: 0;
      width: 41px;
      height: 10px;
      border-radius: 5px;
      background: #e93030;
    }
  `}
`;

const Caret = styled.span`
  flex: none;
  width: ${(p) => p.$w}px;
  height: ${(p) => p.$h}px;
  margin-left: ${(p) => p.$ml || 0}px;
  background: ${(p) => p.$c};
  clip-path: polygon(0 0, 100% 0, 50% 100%);
`;

const Hexagon = styled.svg`
  margin-left: 107px;
`;

const Legend = styled.section`
  display: flex;
  align-items: flex-start;
  flex: none;
  height: 149px;
  padding: 10px 14px 0 20px;
`;

const AverageButton = styled.div`
  display: flex;
  align-items: center;
  width: 124px;
  height: 56px;
  margin-top: 37px;
  padding-left: 12px;
  border-radius: 7px;
  background: #f2f2f2;
  font-size: 35px;
  line-height: 54px;
  color: #333;
`;

const LegendRows = styled.div`
  width: 700px;
  margin-left: 15px;
`;

const LegendRow = styled.div`
  display: flex;
  height: 46px;
  font-size: 36px;
  line-height: 47px;
`;

const Period = styled.span`
  padding-left: 1px;
  font-size: 35px;
  color: #333;
`;

const LegendItem = styled.span`
  color: ${(p) => p.$c};
  font-weight: 500;
`;

const LegendRight = styled.div`
  display: flex;
  align-items: flex-start;
  margin-left: auto;
`;

const Restore = styled.span`
  margin: 13px 28px 0 0;
  font-size: 39px;
  line-height: 50px;
  color: #4a4a4a;
`;

const ChipsButton = styled.span`
  width: 120px;
  height: 60px;
  margin-top: 4px;
  border: 2px solid #6e6e6e;
  border-radius: 8px;
  font-size: 38px;
  line-height: 57px;
  text-align: center;
  color: #2f2f2f;
`;

const ChartArea = styled.div`
  position: relative;
  flex: none;
  height: 750px;
`;

// the tool buttons float over the candles
const Tools = styled.div`
  position: absolute;
  left: 22px;
  top: 660px;
  display: flex;
  gap: 115px;
`;

const RoundButton = styled.div`
  width: 80px;
  height: 80px;
  border-radius: 50%;
  background: rgba(226, 226, 226, 0.65);
  svg {
    fill: none;
    stroke: #5c5c5c;
    stroke-width: 4.4px;
  }
`;

const AxisStrip = styled.div`
  flex: none;
  height: 87px;
`;

const Panel = styled.section`
  position: relative;
  display: flex;
  flex-direction: column;
  justify-content: space-between;
  flex: none;
  width: 1172px;
  height: ${(p) => p.$h}px;
  margin: ${(p) => p.$mt || 0}px 0 0 14px;
  border: 2px solid #ebebeb;
  background: #fefefe;
`;

const Plot = styled.svg`
  overflow: visible;
`;

const VolumeHead = styled.div`
  display: flex;
  align-items: center;
  height: 62px;
  padding: 10px 0 0 10px;
  line-height: 50px;
`;

const Picker = styled.div`
  display: flex;
  align-items: center;
  flex: none;
  width: ${(p) => p.$w}px;
  height: 54px;
  padding-left: 14px;
  border-radius: 7px;
  background: #f1f1f1;
  font-size: 39px;
  color: #2f2f2f;
`;

const Figure = styled.span`
  color: ${(p) => p.$c};
  font-size: 39px;
  font-weight: ${(p) => (p.$bold ? 600 : 400)};
`;

const MacdHead = styled.div`
  display: flex;
  flex-direction: column;
`;

const MacdTop = styled.div`
  display: flex;
  padding: 10px 11px 0 10px;
  font-size: 40px;
`;

const HelpSlot = styled.div`
  margin: 7px 0 0 8px;
`;

const MacdValue = styled.div`
  margin-left: 18px;
  line-height: 42px;
  color: #d63a3a;
`;

const MacdLink = styled.div`
  margin-left: auto;
  font-size: 39.700px;
  line-height: 43px;
  color: #4a90e2;
`;

const MacdBottom = styled.div`
  display: flex;
  height: 26px;
  padding-left: 11px;
  line-height: 19px;
`;

const NewsTabs = styled.nav`
  display: flex;
  align-items: center;
  flex: none;
  height: 75px;
  padding-top: 56px;
  overflow: hidden;
`;

const NewsTab = styled.div`
  flex: none;
  margin-left: ${(p) => p.$ml}px;
  font-size: 48px;
  line-height: 60px;
  color: #686868;
  ${(p) => p.$active && css`
    font-size: 56px;
    font-weight: 500;
    color: #2c2c2c;
  `}
  ${(p) => p.$faded && css`
    color: transparent;
    background: linear-gradient(90deg, #8a8a8a, #ececec 60%);
    background-clip: text;
    -webkit-background-clip: text;
  `}
`;

const BottomBar = styled.footer`
  flex: none;
  display: flex;
  flex-direction: column;
  align-items: center;
  height: 218px;
  background: #242424;
`;

const Actions = styled.div`
  display: flex;
  width: 100%;
  height: 188px;
`;

const Action = styled.div`
  position: relative;
  display: flex;
  flex-direction: column;
  align-items: center;
  width: 400px;
  padding-top: 29px;
`;

const BuyIcon = styled.div`
  width: 54px;
  height: 54px;
  margin: 1px 0 3px;
  border: 3px solid #e43b42;
  border-radius: 6px;
  font-size: 31px;
  font-weight: 700;
  line-height: 50px;
  text-align: center;
  color: #f2343c;
`;

const ActionText = styled.div`
  margin-top: 5px;
  font-size: ${(p) => p.$size}px;
  line-height: 54px;
  color: #cfcfcf;
`;

const Dot = styled.span`
  position: absolute;
  left: 236px;
  top: 27px;
  width: 20px;
  height: 20px;
  border-radius: 50%;
  background: #ea3334;
`;

const HomeIndicator = styled.div`
  width: 420px;
  height: 12px;
  border-radius: 6px;
  background: #b2b2b2;
`;

export default App;
